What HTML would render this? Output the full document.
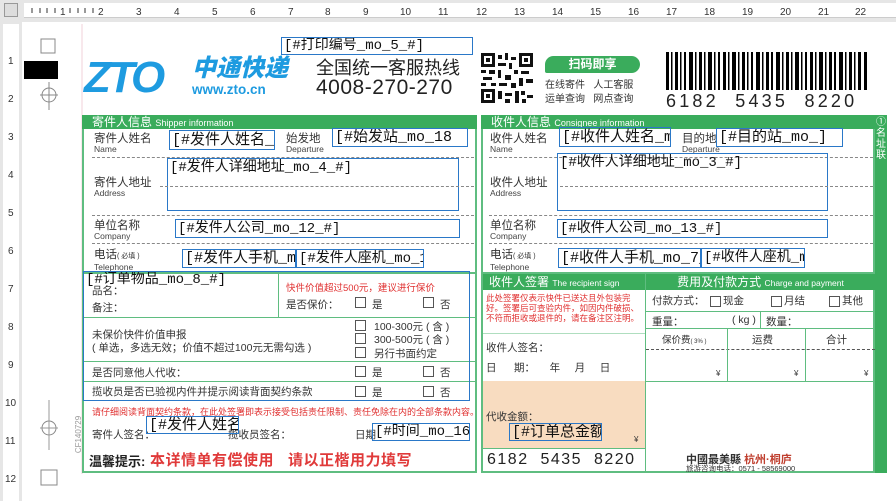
<!DOCTYPE html>
<html><head><meta charset="utf-8"><style>
*{margin:0;padding:0;box-sizing:border-box}
body{width:896px;height:501px;background:#fff;position:relative;overflow:hidden;font-family:"Liberation Sans","Noto Sans CJK SC",sans-serif;color:#222}
.a{position:absolute}
.bx{position:absolute;border:1.3px solid #2a78c8;font-family:"Liberation Mono","Noto Sans CJK SC",monospace;font-size:14px;line-height:1;white-space:nowrap;overflow:hidden;color:#111;padding-left:2px;display:flex;align-items:center}
.bx.t{align-items:flex-start;padding-top:2px}
.g{background:#3aac5c}
.lb{position:absolute;font-size:11.5px;line-height:12px;color:#333}
.lb i{display:block;font-style:normal;font-size:8.5px;color:#444;line-height:9px}
.dl{position:absolute;border-top:1px dashed #888;height:0}
.gl{position:absolute;background:#5fbd80}
.cb{position:absolute;width:11px;height:11px;border:1px solid #555}
.s{font-size:10.5px;color:#333;position:absolute;white-space:nowrap}
.r{color:#e03030}
</style></head><body>
<div class="a" style="left:0;top:0;width:896px;height:22px;background:#e6e6e6"></div>
<div class="a" style="left:0;top:0;width:22px;height:501px;background:#e6e6e6"></div>
<div class="a" style="left:4px;top:3px;width:14px;height:14px;border:1px solid #999;background:#ddd"></div>
<div class="a" style="left:24px;top:3px;width:872px;height:15px;background:#fff;border-bottom:1px solid #ccc"></div>
<div class="a" style="left:3px;top:24px;width:16px;height:477px;background:#fff"></div>
<svg class="a" style="left:0;top:0" width="896" height="501">
<g stroke="#333" stroke-width="1">
<path d="M32 8v5M40 8v5M47 8v5M55 8v5M70 8v5M78 8v5M85 8v5M93 8v5"/>
</g>
<g font-family="Liberation Sans" font-size="10" fill="#333">
<text x="60" y="15">1</text><text x="98" y="15">2</text><text x="136" y="15">3</text><text x="174" y="15">4</text><text x="212" y="15">5</text><text x="250" y="15">6</text><text x="288" y="15">7</text><text x="325" y="15">8</text><text x="363" y="15">9</text><text x="400" y="15">10</text><text x="438" y="15">11</text><text x="476" y="15">12</text><text x="514" y="15">13</text><text x="552" y="15">14</text><text x="590" y="15">15</text><text x="628" y="15">16</text><text x="666" y="15">17</text><text x="704" y="15">18</text><text x="742" y="15">19</text><text x="780" y="15">20</text><text x="818" y="15">21</text><text x="855" y="15">22</text>
<text x="8" y="64">1</text><text x="8" y="102">2</text><text x="8" y="140">3</text><text x="8" y="178">4</text><text x="8" y="216">5</text><text x="8" y="254">6</text><text x="8" y="292">7</text><text x="8" y="330">8</text><text x="8" y="368">9</text><text x="5" y="406">10</text><text x="5" y="444">11</text><text x="5" y="482">12</text>
</g>
<path d="M82 24v450" stroke="#f0d0d8"/>
<rect x="41" y="39" width="14" height="14" fill="none" stroke="#888"/>
<rect x="24" y="61" width="34" height="18" fill="#000"/>
<circle cx="49" cy="95" r="7" fill="none" stroke="#888"/><path d="M49 82v28M40 95h18" stroke="#888"/>
<circle cx="49" cy="428" r="7" fill="none" stroke="#888"/><path d="M49 400v50M40 428h18" stroke="#999"/>
<rect x="41" y="470" width="16" height="15" fill="none" stroke="#888"/>
</svg>
<div class="s" style="left:60px;top:430px;transform:rotate(-90deg);font-size:8px;color:#999">CF140729</div>
<div class="a" style="left:84px;top:58px;font:italic 900 44px/40px 'Liberation Sans',sans-serif;color:#1e9be0;letter-spacing:-3px">ZTO</div>
<div class="a" style="left:192px;top:56px;font-weight:900;font-size:24px;line-height:26px;color:#1e9be0;font-style:italic">中通快递</div>
<div class="a" style="left:192px;top:82px;font-weight:700;font-size:13.5px;color:#1e9be0">www.zto.cn</div>
<div class="a" style="left:316px;top:57px;font-size:18px;line-height:22px">全国统一客服热线</div>
<div class="a" style="left:316px;top:77px;font-size:21px;line-height:22px;letter-spacing:.5px">4008-270-270</div>
<div class="bx" style="left:281px;top:37px;width:192px;height:18px">[#打印编号_mo_5_#]</div>
<svg class="a" style="left:481px;top:53px" width="52" height="50"><rect width="52" height="50" fill="#fff"/>
<g fill="#111"><rect x="0" y="0" width="14" height="14"/><rect x="3" y="3" width="8" height="8" fill="#fff"/><rect x="5" y="5" width="4" height="4"/>
<rect x="38" y="0" width="14" height="14"/><rect x="41" y="3" width="8" height="8" fill="#fff"/><rect x="43" y="5" width="4" height="4"/>
<rect x="0" y="36" width="14" height="14"/><rect x="3" y="39" width="8" height="8" fill="#fff"/><rect x="5" y="41" width="4" height="4"/>
<path d="M17 2h4v4h-4zM24 0h3v7h-3zM30 4h5v3h-5zM17 10h8v3h-8zM28 10h3v6h-3zM0 17h5v3H0zM8 17h6v4H8zM17 17h3v8h-3zM33 17h4v4h-4zM40 18h8v3h-8zM2 24h9v3H2zM24 22h6v5h-6zM38 25h4v8h-4zM45 26h7v4h-7zM0 30h5v3H0zM10 30h5v3h-5zM18 30h8v3h-8zM30 30h5v5h-5zM17 38h4v8h-4zM24 40h7v3h-7zM34 38h4v12h-4zM40 38h4v4h-4zM46 42h6v3h-6zM24 46h5v4h-5zM41 46h4v4h-4z"/></g></svg>
<div class="a g" style="left:545px;top:56px;width:95px;height:17px;border-radius:9px 9px 9px 2px;color:#fff;font-size:12px;font-weight:700;text-align:center;line-height:17px">扫码即享</div>
<div class="s" style="left:545px;top:76px;font-size:10px">在线寄件 &nbsp; 人工客服</div>
<div class="s" style="left:545px;top:90px;font-size:10px">运单查询 &nbsp; 网点查询</div>
<svg class="a" style="left:666px;top:52px" width="202" height="38"><g fill="#000">
<rect x="0" width="3" height="38"/><rect x="5" width="1.5" height="38"/><rect x="9" width="3" height="38"/><rect x="14" width="1.5" height="38"/><rect x="18" width="2" height="38"/><rect x="23" width="4" height="38"/><rect x="29" width="1.5" height="38"/><rect x="33" width="3" height="38"/><rect x="38" width="1.5" height="38"/><rect x="42" width="4" height="38"/><rect x="48" width="1.5" height="38"/><rect x="52" width="2" height="38"/><rect x="57" width="3" height="38"/><rect x="62" width="1.5" height="38"/><rect x="66" width="4" height="38"/><rect x="72" width="1.5" height="38"/><rect x="76" width="3" height="38"/><rect x="81" width="1.5" height="38"/><rect x="85" width="2" height="38"/><rect x="90" width="4" height="38"/><rect x="96" width="1.5" height="38"/><rect x="100" width="3" height="38"/><rect x="105" width="2" height="38"/><rect x="110" width="4" height="38"/><rect x="116" width="1.5" height="38"/><rect x="120" width="3" height="38"/><rect x="125" width="1.5" height="38"/><rect x="129" width="4" height="38"/><rect x="135" width="1.5" height="38"/><rect x="139" width="2" height="38"/><rect x="144" width="3" height="38"/><rect x="149" width="1.5" height="38"/><rect x="153" width="4" height="38"/><rect x="159" width="1.5" height="38"/><rect x="163" width="3" height="38"/><rect x="168" width="2" height="38"/><rect x="173" width="4" height="38"/><rect x="179" width="1.5" height="38"/><rect x="183" width="3" height="38"/><rect x="188" width="1.5" height="38"/><rect x="192" width="3" height="38"/><rect x="198" width="3" height="38"/></g></svg>
<div class="a" style="left:666px;top:91px;font-size:18px;letter-spacing:3.2px;line-height:20px">6182 &nbsp;5435 &nbsp;8220</div>

<div class="a" style="left:82px;top:115px;width:395px;height:358px;border:2px solid #5fbd80;border-top:0"></div>
<div class="a g" style="left:82px;top:115px;width:395px;height:14px;color:#fff;font-size:12px;line-height:14px;padding-left:10px">寄件人信息 <span style="font-size:9px">Shipper information</span></div>
<div class="lb" style="left:94px;top:133px">寄件人姓名<i>Name</i></div>
<div class="lb" style="left:286px;top:133px">始发地<i>Departure</i></div>
<div class="bx" style="left:169px;top:130px;width:106px;height:20px;font-size:15px">[#发件人姓名_</div>
<div class="bx" style="left:332px;top:128px;width:136px;height:19px;font-size:15px">[#始发站_mo_18</div>
<div class="dl" style="left:92px;top:157px;width:382px"></div>
<div class="lb" style="left:94px;top:177px">寄件人地址<i>Address</i></div>
<div class="bx t" style="left:167px;top:158px;width:292px;height:53px">[#发件人详细地址_mo_4_#]</div>
<div class="dl" style="left:160px;top:186px;width:314px"></div>
<div class="dl" style="left:92px;top:215px;width:382px"></div>
<div class="lb" style="left:94px;top:220px">单位名称<i>Company</i></div>
<div class="bx" style="left:175px;top:219px;width:285px;height:19px">[#发件人公司_mo_12_#]</div>
<div class="dl" style="left:92px;top:243px;width:382px"></div>
<div class="lb" style="left:94px;top:249px">电话<span style="font-size:7px">( 必填 )</span><i>Telephone</i></div>
<div class="bx" style="left:182px;top:249px;width:114px;height:19px;font-size:15px">[#发件人手机_m</div>
<div class="bx" style="left:296px;top:249px;width:128px;height:19px">[#发件人座机_mo_14</div>
<div class="gl" style="left:82px;top:272px;width:395px;height:2px"></div>
<div class="s" style="left:92px;top:283px">品名：</div>
<div class="s" style="left:92px;top:300px">备注：</div>
<div class="gl" style="left:278px;top:274px;width:1px;height:43px"></div>
<div class="s r" style="left:286px;top:280px;font-size:9.5px">快件价值超过500元，建议进行保价</div>
<div class="s" style="left:286px;top:297px">是否保价：</div>
<div class="cb" style="left:355px;top:297px"></div><div class="s" style="left:372px;top:297px">是</div>
<div class="cb" style="left:423px;top:297px"></div><div class="s" style="left:440px;top:297px">否</div>
<div class="gl" style="left:84px;top:317px;width:391px;height:1px"></div>
<div class="s" style="left:92px;top:327px">未保价快件价值申报</div>
<div class="s" style="left:92px;top:340px">( 单选，多选无效；价值不超过100元无需勾选 )</div>
<div class="cb" style="left:355px;top:320px"></div><div class="s" style="left:374px;top:319px">100-300元 ( 含 )</div>
<div class="cb" style="left:355px;top:333px"></div><div class="s" style="left:374px;top:332px">300-500元 ( 含 )</div>
<div class="cb" style="left:355px;top:347px"></div><div class="s" style="left:374px;top:346px">另行书面约定</div>
<div class="gl" style="left:84px;top:361px;width:391px;height:1px"></div>
<div class="s" style="left:92px;top:365px">是否同意他人代收：</div>
<div class="cb" style="left:355px;top:366px"></div><div class="s" style="left:372px;top:365px">是</div>
<div class="cb" style="left:423px;top:366px"></div><div class="s" style="left:440px;top:365px">否</div>
<div class="gl" style="left:84px;top:381px;width:391px;height:1px"></div>
<div class="s" style="left:92px;top:384px">揽收员是否已验视内件并提示阅读背面契约条款</div>
<div class="cb" style="left:355px;top:386px"></div><div class="s" style="left:372px;top:385px">是</div>
<div class="cb" style="left:423px;top:386px"></div><div class="s" style="left:440px;top:385px">否</div>
<div class="bx t" style="left:83px;top:271px;width:387px;height:130px;padding-top:1px">[#订单物品_mo_8_#]</div>
<div class="s r" style="left:92px;top:405px;font-size:9px">请仔细阅读背面契约条款，在此处签署即表示接受包括责任限制、责任免除在内的全部条款内容。</div>
<div class="s" style="left:92px;top:427px">寄件人签名：</div>
<div class="s" style="left:228px;top:427px">揽收员签名：</div>
<div class="s" style="left:355px;top:427px">日期</div>
<div class="bx" style="left:146px;top:416px;width:93px;height:18px;font-size:15px">[#发件人姓名_</div>
<div class="bx" style="left:372px;top:423px;width:98px;height:18px">[#时间_mo_16_#</div>
<div class="a" style="left:89px;top:451px;font-size:13px;font-weight:700;color:#222">温馨提示:</div>
<div class="a" style="left:150px;top:449px;font-size:15px;font-weight:700;color:#e03a3a;letter-spacing:.5px">本详情单有偿使用 &nbsp; 请以正楷用力填写</div>

<div class="a" style="left:481px;top:115px;width:394px;height:358px;border:2px solid #5fbd80;border-top:0"></div>
<div class="a g" style="left:481px;top:115px;width:394px;height:14px;color:#fff;font-size:12px;line-height:14px;padding-left:10px">收件人信息 <span style="font-size:9px">Consignee information</span></div>
<div class="a g" style="left:875px;top:115px;width:12px;height:358px"></div>
<div class="a" style="left:876px;top:117px;width:10px;color:#fff;font-size:10px;line-height:11px;text-align:center">①<br>名<br>址<br>联</div>
<div class="lb" style="left:490px;top:133px">收件人姓名<i>Name</i></div>
<div class="lb" style="left:682px;top:133px">目的地<i>Departure</i></div>
<div class="bx" style="left:559px;top:127px;width:112px;height:20px;font-size:15px">[#收件人姓名_m</div>
<div class="bx" style="left:716px;top:128px;width:127px;height:19px;font-size:15px">[#目的站_mo_]</div>
<div class="dl" style="left:489px;top:157px;width:384px"></div>
<div class="lb" style="left:490px;top:177px">收件人地址<i>Address</i></div>
<div class="bx t" style="left:557px;top:153px;width:271px;height:58px">[#收件人详细地址_mo_3_#]</div>
<div class="dl" style="left:560px;top:186px;width:313px"></div>
<div class="dl" style="left:489px;top:215px;width:384px"></div>
<div class="lb" style="left:490px;top:220px">单位名称<i>Company</i></div>
<div class="bx" style="left:557px;top:219px;width:271px;height:19px">[#收件人公司_mo_13_#]</div>
<div class="dl" style="left:489px;top:243px;width:384px"></div>
<div class="lb" style="left:490px;top:249px">电话<span style="font-size:7px">( 必填 )</span><i>Telephone</i></div>
<div class="bx" style="left:558px;top:248px;width:143px;height:20px;font-size:15px">[#收件人手机_mo_7_</div>
<div class="bx" style="left:701px;top:248px;width:104px;height:20px">[#收件人座机_mo</div>
<div class="gl" style="left:481px;top:272px;width:394px;height:2px"></div>
<div class="a g" style="left:483px;top:274px;width:162px;height:16px;color:#fff;font-size:12px;line-height:16px;padding-left:6px">收件人签署 <span style="font-size:8.5px">The recipient sign</span></div>
<div class="a g" style="left:646px;top:274px;width:229px;height:16px;color:#fff;font-size:12px;line-height:16px;text-align:center">费用及付款方式 <span style="font-size:8.5px">Charge and payment</span></div>
<div class="gl" style="left:645px;top:274px;width:1px;height:198px"></div>
<div class="s r" style="left:486px;top:293px;font-size:8.5px;line-height:10px">此处签署仅表示快件已送达且外包装完<br>好。签署后可查验内件，如因内件破损、<br>不符而拒收或退件的，请在备注区注明。</div>
<div class="gl" style="left:483px;top:333px;width:162px;height:1px;opacity:.5"></div>
<div class="s" style="left:486px;top:340px">收件人签名：</div>
<div class="s" style="left:486px;top:360px">日 &nbsp; &nbsp; &nbsp;期： &nbsp; &nbsp; 年 &nbsp; &nbsp; 月 &nbsp; &nbsp; 日</div>
<div class="a" style="left:483px;top:381px;width:162px;height:67px;background:#f8dcc0"></div>
<div class="s" style="left:486px;top:409px">代收金额：</div>
<div class="s" style="left:634px;top:435px;font-size:8px">¥</div>
<div class="bx" style="left:509px;top:423px;width:93px;height:18px;font-size:15px">[#订单总金额_</div>
<div class="gl" style="left:483px;top:448px;width:162px;height:1px"></div>
<div class="a" style="left:487px;top:451px;font-size:16px;letter-spacing:1.5px">6182 &nbsp;5435 &nbsp;8220</div>
<div class="s" style="left:652px;top:293px">付款方式：</div>
<div class="cb" style="left:710px;top:296px"></div><div class="s" style="left:723px;top:293px">现金</div>
<div class="cb" style="left:771px;top:296px"></div><div class="s" style="left:784px;top:293px">月结</div>
<div class="cb" style="left:829px;top:296px"></div><div class="s" style="left:842px;top:293px">其他</div>
<div class="gl" style="left:646px;top:311px;width:229px;height:1px"></div>
<div class="s" style="left:652px;top:314px">重量：</div>
<div class="s" style="left:732px;top:314px">( kg )</div>
<div class="gl" style="left:760px;top:311px;width:1px;height:17px"></div>
<div class="s" style="left:766px;top:314px">数量：</div>
<div class="gl" style="left:646px;top:328px;width:229px;height:1px"></div>
<div class="s" style="left:662px;top:332px;font-size:9.5px">保价费<span style="font-size:6px">( 3% )</span></div>
<div class="s" style="left:752px;top:332px">运费</div>
<div class="s" style="left:826px;top:332px">合计</div>
<div class="dl" style="left:646px;top:349px;width:229px;border-color:#555"></div>
<div class="gl" style="left:727px;top:328px;width:1px;height:53px"></div>
<div class="gl" style="left:805px;top:328px;width:1px;height:53px"></div>
<div class="s" style="left:716px;top:369px;font-size:8px">¥</div>
<div class="s" style="left:794px;top:369px;font-size:8px">¥</div>
<div class="s" style="left:864px;top:369px;font-size:8px">¥</div>
<div class="gl" style="left:646px;top:381px;width:229px;height:1px"></div>
<div class="s" style="left:686px;top:451px;font-size:11px;font-weight:700">中國最美縣 <span style="color:#c04030">杭州·桐庐</span></div>
<div class="s" style="left:686px;top:463px;font-size:7.5px">旅游咨询电话：0571 - 58569000</div>
</body></html>
